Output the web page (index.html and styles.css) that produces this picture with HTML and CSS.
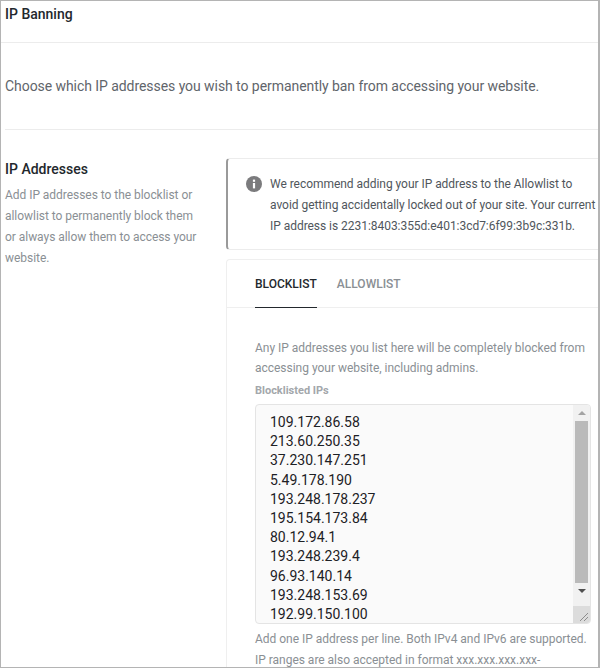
FILE: index.html
```html
<!DOCTYPE html>
<html>
<head>
    <title>IP Banning</title>
    <meta name="viewport" content="width=device-width, initial-scale=1.0">
    <link rel="stylesheet" href="styles.css">
</head>
<body>
    <div class="frame">
        <!-- Header -->
        <div class="page-title">IP Banning</div>
        <div class="page-intro">
            <p>Choose which IP addresses you wish to permanently ban from accessing your website.</p>
        </div>

        <div class="section">
            <!-- Left column -->
            <div class="section-info">
                <h2>IP Addresses</h2>
                <p>Add IP addresses to the blocklist or allowlist to permanently block them or always allow them to access your website.</p>
            </div>

            <!-- Right column -->
            <div class="section-main">
                <div class="notice">
                    <svg class="notice-icon" viewBox="0 0 16 16" width="16" height="16">
                        <circle cx="8" cy="8" r="8" fill="#7b7b7d"/>
                        <rect x="6.9" y="7" width="2.2" height="5.4" fill="#fff"/>
                        <rect x="6.9" y="3.6" width="2.2" height="2.2" fill="#fff"/>
                    </svg>
                    <p>We recommend adding your IP address to the Allowlist to avoid getting accidentally locked out of your site. Your current IP address is 2231:8403:355d:e401:3cd7:6f99:3b9c:331b.</p>
                </div>

                <div class="card">
                    <div class="tabs">
                        <a class="tab active">BLOCKLIST</a>
                        <a class="tab">ALLOWLIST</a>
                    </div>
                    <div class="card-body">
                        <p class="help">Any IP addresses you list here will be completely blocked from accessing your website, including admins.</p>
                        <label class="field-label">Blocklisted IPs</label>
                        <div class="ip-box">
                            <div class="ip-list">
                                <div>109.172.86.58</div>
                                <div>213.60.250.35</div>
                                <div>37.230.147.251</div>
                                <div>5.49.178.190</div>
                                <div>193.248.178.237</div>
                                <div>195.154.173.84</div>
                                <div>80.12.94.1</div>
                                <div>193.248.239.4</div>
                                <div>96.93.140.14</div>
                                <div>193.248.153.69</div>
                                <div>192.99.150.100</div>
                            </div>
                            <div class="scrollbar">
                                <div class="scroll-btn"><span class="arrow-up"></span></div>
                                <div class="scroll-thumb"></div>
                                <div class="scroll-btn"><span class="arrow-down"></span></div>
                                <div class="scroll-corner">
                                    <svg viewBox="0 0 17 17" width="17" height="17">
                                        <path d="M7 15 L15 7 M11 15 L15 11" stroke="#8c8c8c" stroke-width="1" fill="none"/>
                                    </svg>
                                </div>
                            </div>
                        </div>
                        <p class="help hint">Add one IP address per line. Both IPv4 and IPv6 are supported. IP ranges are also accepted in format xxx.xxx.xxx.xxx-xxx.xxx.xxx.xxx.</p>
                    </div>
                </div>
            </div>
        </div>
    </div>
</body>
</html>
```

FILE: styles.css
```css
html, body {
    margin: 0;
    padding: 0;
    height: 668px;
    overflow: hidden;
    background-color: #fff;
}

.frame {
    box-sizing: border-box;
    height: 668px;
    overflow: hidden;
    border: 1px solid #b4b4b4;
    border-right-width: 2px;
    font-family: 'Roboto', 'Liberation Sans', sans-serif;
    color: #7f858b;
}

p {
    margin: 0;
}

/* Header */
.page-title {
    padding: 4px 4px 0;
    box-sizing: border-box;
    border-bottom: 1px solid #ececec;
    height: 42px;
    font-size: 14px;
    line-height: 18px;
    font-weight: 500;
    color: #23282d;
}

.page-intro {
    margin-left: 4px;
    height: 87px;
    box-sizing: border-box;
    border-bottom: 1px solid #ececec;
    display: flex;
    align-items: center;
    font-size: 14px;
    letter-spacing: -0.06px;
    color: #5f656b;
}

/* Two columns */
.section {
    display: flex;
    padding: 28px 0 0 4px;
}

.section-info {
    width: 221px;
    flex-shrink: 0;
}

.section-info h2 {
    margin: 0;
    padding-top: 1px;
    font-size: 14px;
    line-height: 20px;
    font-weight: 500;
    color: #23282d;
}

.section-info p {
    margin-top: 6px;
    width: 195px;
    font-size: 12px;
    line-height: 21px;
    letter-spacing: -0.04px;
    color: #8a8f94;
}

.section-main {
    flex: 1;
    min-width: 0;
}

/* Notice */
.notice {
    display: flex;
    gap: 8px;
    box-sizing: border-box;
    height: 92px;
    padding: 15px 0 0 18px;
    border: 1px solid #ececec;
    border-left: 2px solid #9a9a9a;
    border-right: 0;
    border-radius: 4px 0 0 4px;
    font-size: 12px;
    line-height: 21px;
    letter-spacing: -0.04px;
    color: #50565c;
}

.notice-icon {
    flex-shrink: 0;
    margin-top: 2px;
}

/* Card */
.card {
    margin-top: 9px;
    border: 1px solid #efefef;
    border-right: 0;
    border-radius: 4px 0 0 0;
}

.tabs {
    display: flex;
    gap: 20px;
    height: 47px;
    padding-left: 28px;
    border-bottom: 1px solid #efefef;
}

.tab {
    box-sizing: border-box;
    height: 48px;
    padding-top: 16px;
    font-size: 12px;
    line-height: 16px;
    font-weight: 500;
    color: #8a8f94;
}

.tab.active {
    color: #23282d;
    border-bottom: 1px solid #23282d;
}

.card-body {
    padding: 30px 7px 0 28px;
}

.help {
    font-size: 12px;
    line-height: 20px;
    letter-spacing: -0.02px;
    color: #8a8f94;
}

.field-label {
    display: block;
    margin-top: 4px;
    font-size: 11px;
    line-height: 18px;
    font-weight: 700;
    color: #a3a7ab;
}

/* Fake textarea */
.ip-box {
    display: flex;
    box-sizing: border-box;
    height: 220px;
    margin-top: 4px;
    overflow: hidden;
    background: #fafafa;
    border: 1px solid #e4e4e4;
    border-radius: 4px;
}

.ip-list {
    flex: 1;
    padding: 8px 0 0 14px;
    font-size: 14px;
    line-height: 19.2px;
    color: #1d2125;
}

.scrollbar {
    width: 17px;
    display: flex;
    flex-direction: column;
    background: #f1f1f1;
}

.scroll-btn {
    height: 16px;
    flex-shrink: 0;
    display: flex;
    align-items: center;
    justify-content: center;
}

.arrow-up,
.arrow-down {
    width: 0;
    height: 0;
    border-left: 4px solid transparent;
    border-right: 4px solid transparent;
}

.arrow-up {
    border-bottom: 4px solid #a3a3a3;
}

.arrow-down {
    border-top: 4px solid #505050;
}

.scroll-thumb {
    height: 165px;
    margin: 0 2px;
    background: #bababa;
}

.scroll-corner {
    height: 17px;
    margin-top: 7px;
    background: #dcdcdc;
}

.scroll-corner svg {
    display: block;
}

.hint {
    margin-top: 5px;
    line-height: 21px;
}
```
